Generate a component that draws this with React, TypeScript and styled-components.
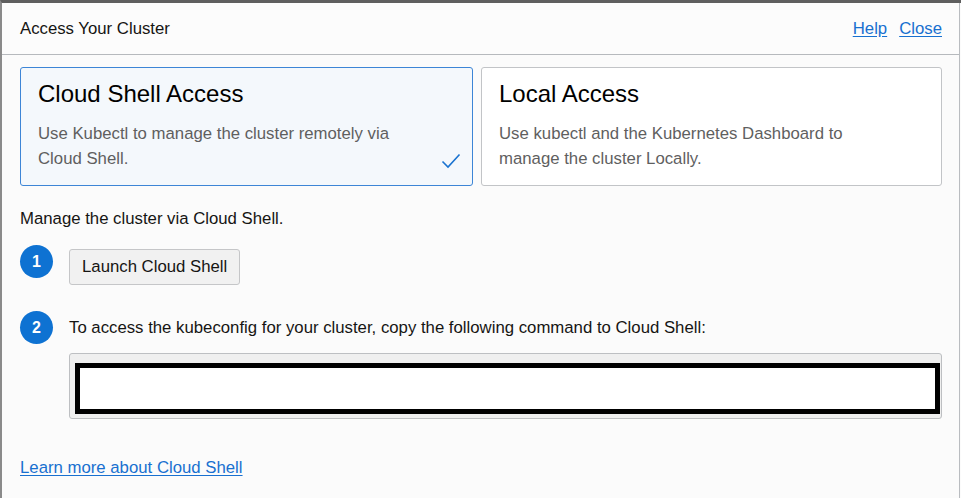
import React from "react";
import styled, { createGlobalStyle } from "styled-components";

const Global = createGlobalStyle`
  html, body { margin: 0; padding: 0; background: #fbfbfb; }
  body { font-family: "Liberation Sans", Arial, sans-serif; color: #161513; }
  * { box-sizing: border-box; }
`;

const Frame = styled.div`
  width: 961px;
  height: 498px;
  border-top: 3px solid #5f5f5f;
  border-left: 2px solid #8a8a8a;
  overflow: hidden;
`;

const Dialog = styled.div`
  width: 958px;
  height: 100%;
  border-right: 1px solid #b9bcc0;
  background: #fbfbfb;
  display: flex;
  flex-direction: column;
`;

const Header = styled.div`
  height: 52px;
  padding: 0 17px 0 18px;
  border-bottom: 1px solid #b6b9bd;
  display: flex;
  align-items: center;
  justify-content: space-between;
  background: #fcfcfc;
`;

const Title = styled.div`
  font-size: 16.75px;
  color: #161513;
  padding-top: 1px;
`;

const Links = styled.div`
  display: flex;
  gap: 12px;
  padding-top: 1px;
`;

const Link = styled.a`
  font-size: 16.75px;
  color: #1870d0;
  text-decoration: underline;
  text-underline-offset: 2px;
  cursor: pointer;
`;

const Body = styled.div`
  padding: 12px 17px 0 18px;
  display: flex;
  flex-direction: column;
`;

const Cards = styled.div`
  display: grid;
  grid-template-columns: 453px 461px;
  gap: 8px;
`;

const Card = styled.div<{ $selected?: boolean }>`
  position: relative;
  height: 119px;
  padding: 12px 17px 0 17px;
  border: 1px solid ${(p) => (p.$selected ? "#3d85d6" : "#c2c4c7")};
  border-radius: 3px;
  background: ${(p) => (p.$selected ? "#f4f8fc" : "#ffffff")};
`;

const CardTitle = styled.div`
  font-size: 24px;
  color: #000;
  line-height: 28px;
`;

const CardText = styled.div`
  margin-top: 13px;
  font-size: 16.75px;
  line-height: 25px;
  color: #5f5f5f;
  max-width: 390px;
`;

const Check = styled.svg`
  position: absolute;
  right: 11px;
  bottom: 16px;
`;

const Intro = styled.div`
  margin-top: 23px;
  font-size: 16.75px;
  color: #161513;
`;

const Step = styled.div<{ $mt: number; $align: string }>`
  margin-top: ${(p) => p.$mt}px;
  display: grid;
  grid-template-columns: 49px 1fr;
  align-items: ${(p) => p.$align};
`;

const Badge = styled.div`
  width: 33px;
  height: 33px;
  border-radius: 50%;
  background: #0e72d2;
  color: #fff;
  font-weight: bold;
  font-size: 16px;
  display: flex;
  align-items: center;
  justify-content: center;
`;

const Button = styled.button`
  justify-self: start;
  margin-top: 4px;
  height: 36px;
  padding: 0 12px;
  font-family: "Liberation Sans", Arial, sans-serif;
  font-size: 16.75px;
  color: #161513;
  background: #f1f1f1;
  border: 1px solid #c5c6c8;
  border-radius: 3px;
`;

const StepText = styled.div`
  font-size: 16.75px;
  color: #161513;
`;

const CodeWrap = styled.div`
  margin: 9px 0 0 49px;
  height: 66px;
  background: #efefef;
  border: 1px solid #bdbfc2;
  border-radius: 3px;
  padding: 9px 1px 4px 5px;
`;

const CodeBox = styled.div`
  height: 100%;
  background: #fff;
  border: 5px solid #000;
`;

const LearnMore = styled(Link)`
  margin-top: 39px;
  align-self: flex-start;
`;

export default function App() {
  return (
    <>
      <Global />
      <Frame>
        <Dialog>
          <Header>
            <Title>Access Your Cluster</Title>
            <Links>
              <Link>Help</Link>
              <Link>Close</Link>
            </Links>
          </Header>
          <Body>
            <Cards>
              <Card $selected>
                <CardTitle>Cloud Shell Access</CardTitle>
                <CardText>Use Kubectl to manage the cluster remotely via Cloud Shell.</CardText>
                <Check width="20" height="16" viewBox="0 0 20 16">
                  <path d="M1.5 8.5 L7 14 L18.5 1.5" fill="none" stroke="#1a73d0" strokeWidth="1.6" />
                </Check>
              </Card>
              <Card>
                <CardTitle>Local Access</CardTitle>
                <CardText>Use kubectl and the Kubernetes Dashboard to manage the cluster Locally.</CardText>
              </Card>
            </Cards>
            <Intro>Manage the cluster via Cloud Shell.</Intro>
            <Step $mt={16} $align="start">
              <Badge>1</Badge>
              <Button>Launch Cloud Shell</Button>
            </Step>
            <Step $mt={26} $align="center">
              <Badge>2</Badge>
              <StepText>To access the kubeconfig for your cluster, copy the following command to Cloud Shell:</StepText>
            </Step>
            <CodeWrap>
              <CodeBox />
            </CodeWrap>
            <LearnMore>Learn more about Cloud Shell</LearnMore>
          </Body>
        </Dialog>
      </Frame>
    </>
  );
}
